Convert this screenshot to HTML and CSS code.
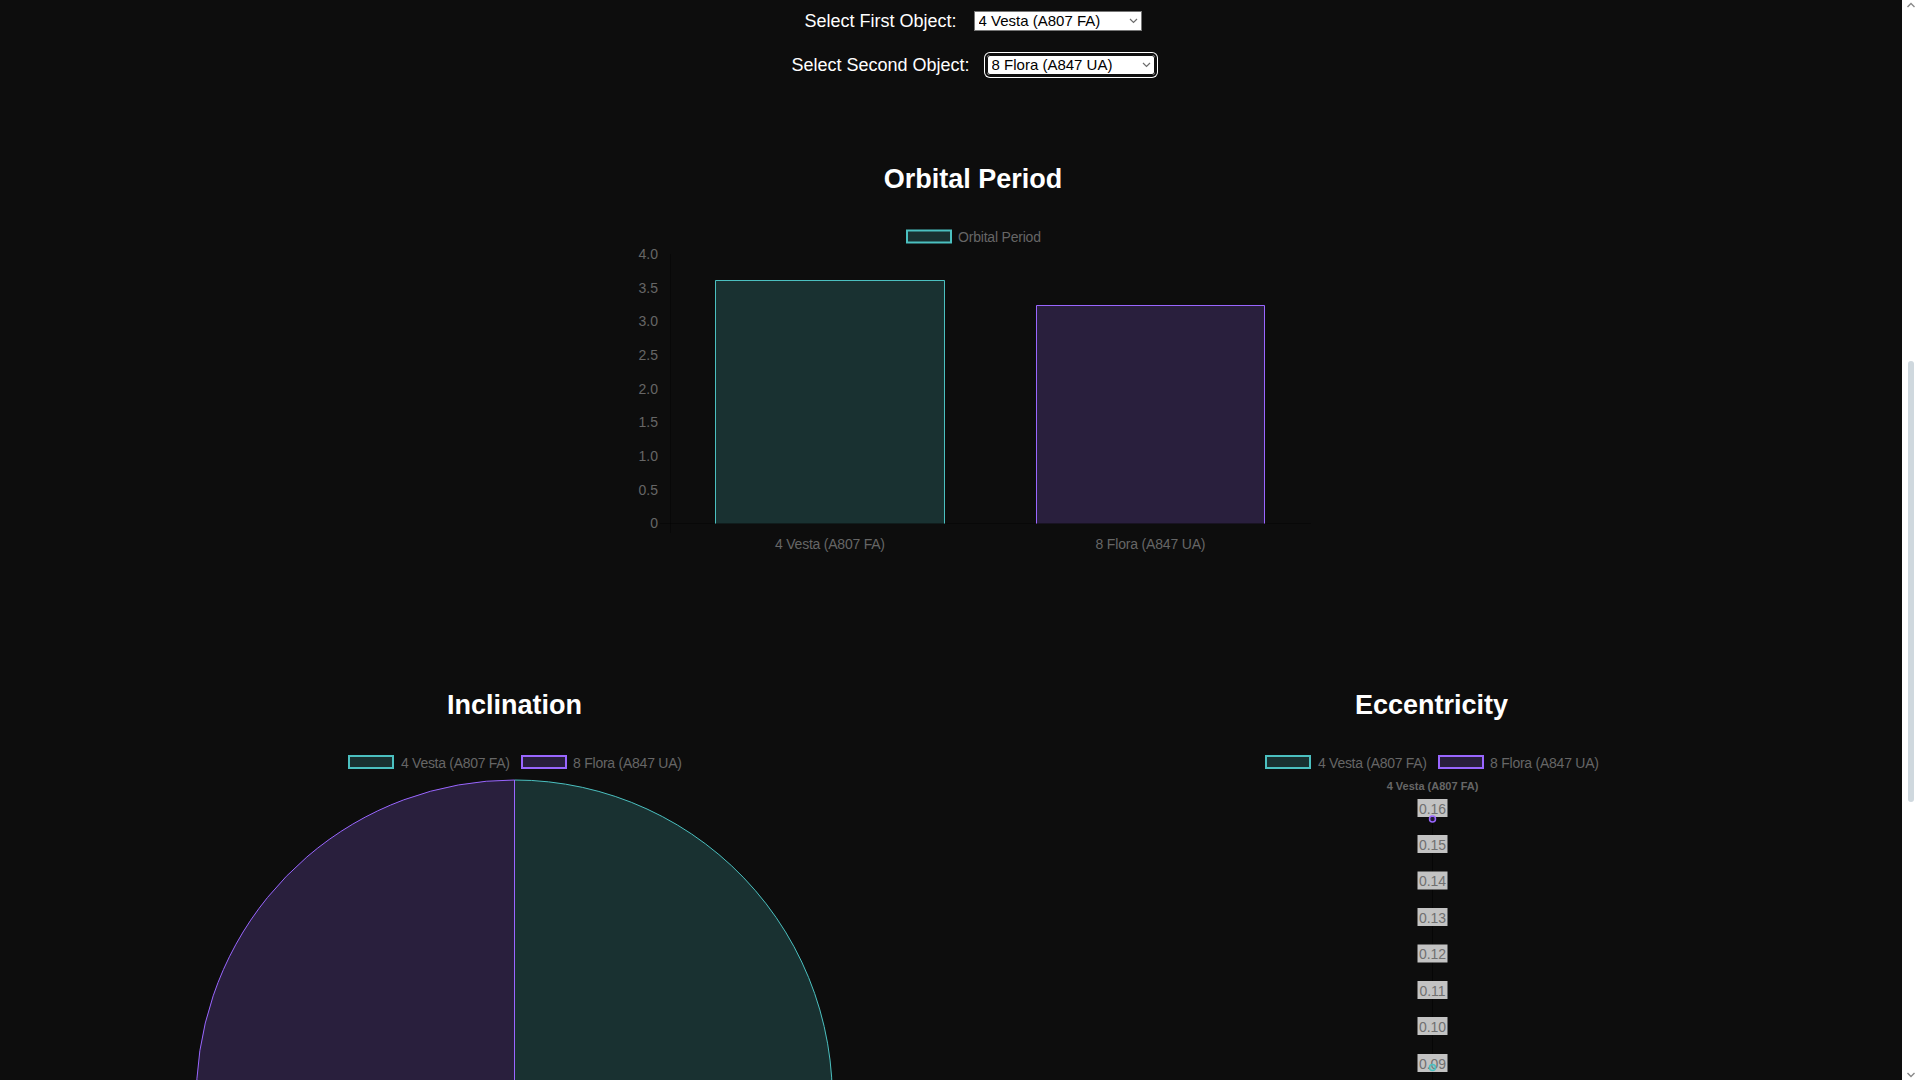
FILE: index.html
```html
<!DOCTYPE html>
<html lang="en">
<head>
<meta charset="utf-8">
<title>Asteroid Comparison</title>
<link rel="stylesheet" href="styles.css">
</head>
<body>
<div class="page">
  <div class="controls">
    <div class="control-row">
      <label class="control-label" for="first-object">Select First Object:</label>
      <span class="select-wrap">
        <select id="first-object" class="object-select">
          <option>1 Ceres (A801 AA)</option>
          <option>2 Pallas (A802 FA)</option>
          <option>3 Juno (A804 RA)</option>
          <option selected>4 Vesta (A807 FA)</option>
          <option>8 Flora (A847 UA)</option>
        </select>
        <svg class="select-chevron" width="9" height="6" viewBox="0 0 9 6"><polyline points="1,1 4.5,4.5 8,1"/></svg>
      </span>
    </div>
    <div class="control-row">
      <label class="control-label" for="second-object">Select Second Object:</label>
      <span class="select-wrap">
        <select id="second-object" class="object-select is-focused">
          <option>1 Ceres (A801 AA)</option>
          <option>2 Pallas (A802 FA)</option>
          <option>3 Juno (A804 RA)</option>
          <option>4 Vesta (A807 FA)</option>
          <option selected>8 Flora (A847 UA)</option>
        </select>
        <svg class="select-chevron" width="9" height="6" viewBox="0 0 9 6"><polyline points="1,1 4.5,4.5 8,1"/></svg>
      </span>
    </div>
  </div>

  <section class="chart-block chart-block--period">
    <h2 class="chart-title">Orbital Period</h2>
    <svg class="chart chart--bar" width="680" height="340" viewBox="0 0 680 340">
      <rect class="legend-box legend-box--teal" x="274" y="10.5" width="44" height="12"/>
      <text class="chart-text" x="325" y="17" dominant-baseline="central" textLength="83" lengthAdjust="spacing">Orbital Period</text>

      <line class="axis-line" x1="37.5" y1="34" x2="37.5" y2="313"/>
      <line class="axis-line" x1="27" y1="303.5" x2="678" y2="303.5"/>

      <g class="chart-text tick-y" text-anchor="end">
        <text x="25" y="34" dominant-baseline="central">4.0</text>
        <text x="25" y="67.7" dominant-baseline="central">3.5</text>
        <text x="25" y="101.3" dominant-baseline="central">3.0</text>
        <text x="25" y="135" dominant-baseline="central">2.5</text>
        <text x="25" y="168.6" dominant-baseline="central">2.0</text>
        <text x="25" y="202.3" dominant-baseline="central">1.5</text>
        <text x="25" y="236" dominant-baseline="central">1.0</text>
        <text x="25" y="269.6" dominant-baseline="central">0.5</text>
        <text x="25" y="303.3" dominant-baseline="central">0</text>
      </g>

      <rect class="fill-teal" x="82" y="60" width="230" height="243.5"/>
      <path class="stroke-teal" d="M82.5 303.5 V60.5 H311.5 V303.5"/>
      <rect class="fill-purple" x="403" y="85" width="229" height="218.5"/>
      <path class="stroke-purple" d="M403.5 303.5 V85.5 H631.5 V303.5"/>

      <g class="chart-text" text-anchor="middle">
        <text x="197" y="324" dominant-baseline="central" textLength="110" lengthAdjust="spacing">4 Vesta (A807 FA)</text>
        <text x="517.5" y="324" dominant-baseline="central" textLength="110" lengthAdjust="spacing">8 Flora (A847 UA)</text>
      </g>
    </svg>
  </section>

  <div class="chart-grid">
    <section class="chart-block">
      <h2 class="chart-title">Inclination</h2>
      <svg class="chart chart--half" width="917" height="700" viewBox="0 0 917 700">
        <rect class="legend-box legend-box--teal" x="293" y="16" width="44" height="12"/>
        <text class="chart-text" x="345" y="22.5" dominant-baseline="central" textLength="109" lengthAdjust="spacing">4 Vesta (A807 FA)</text>
        <rect class="legend-box legend-box--purple" x="466" y="16" width="44" height="12"/>
        <text class="chart-text" x="517" y="22.5" dominant-baseline="central" textLength="109" lengthAdjust="spacing">8 Flora (A847 UA)</text>

        <path class="slice slice--teal" d="M458.5 358 L458.5 40 A318 318 0 1 1 365 662 Z"/>
        <path class="slice slice--purple" d="M458.5 358 L365 662 A318 318 0 0 1 458.5 40 Z"/>
      </svg>
    </section>

    <section class="chart-block">
      <h2 class="chart-title">Eccentricity</h2>
      <svg class="chart chart--half" width="917" height="700" viewBox="0 0 917 700">
        <rect class="legend-box legend-box--teal" x="293" y="16" width="44" height="12"/>
        <text class="chart-text" x="345" y="22.5" dominant-baseline="central" textLength="109" lengthAdjust="spacing">4 Vesta (A807 FA)</text>
        <rect class="legend-box legend-box--purple" x="466" y="16" width="44" height="12"/>
        <text class="chart-text" x="517" y="22.5" dominant-baseline="central" textLength="109" lengthAdjust="spacing">8 Flora (A847 UA)</text>

        <text class="point-label" x="459.5" y="46" text-anchor="middle" dominant-baseline="central">4 Vesta (A807 FA)</text>
        <line class="radar-line" x1="459.5" y1="62" x2="459.5" y2="650"/>

        <g class="radar-ticks" text-anchor="middle">
          <rect x="444.5" y="59" width="30" height="18"/><text x="459.5" y="68.5" dominant-baseline="central">0.16</text>
          <rect x="444.5" y="95" width="30" height="18"/><text x="459.5" y="104.5" dominant-baseline="central">0.15</text>
          <rect x="444.5" y="131.5" width="30" height="18"/><text x="459.5" y="141" dominant-baseline="central">0.14</text>
          <rect x="444.5" y="168" width="30" height="18"/><text x="459.5" y="177.5" dominant-baseline="central">0.13</text>
          <rect x="444.5" y="204.5" width="30" height="18"/><text x="459.5" y="214" dominant-baseline="central">0.12</text>
          <rect x="444.5" y="241" width="30" height="18"/><text x="459.5" y="250.5" dominant-baseline="central">0.11</text>
          <rect x="444.5" y="277" width="30" height="18"/><text x="459.5" y="286.5" dominant-baseline="central">0.10</text>
          <rect x="444.5" y="314" width="30" height="18"/><text x="459.5" y="323.5" dominant-baseline="central">0.09</text>
        </g>

        <circle class="radar-point radar-point--purple" cx="459.5" cy="79" r="3"/>
        <circle class="radar-point radar-point--teal" cx="459.5" cy="327.5" r="3"/>
      </svg>
    </section>
  </div>
</div>

<div class="fake-scrollbar" aria-hidden="true">
  <svg class="scroll-arrow" width="18" height="12" viewBox="0 0 18 12"><polyline points="5.5,7 9,3.5 12.5,7"/></svg>
  <div class="scroll-track"><div class="scroll-thumb"></div></div>
  <svg class="scroll-arrow" width="18" height="12" viewBox="0 0 18 12"><polyline points="5.5,5 9,8.5 12.5,5"/></svg>
</div>
</body>
</html>
```

FILE: styles.css
```css
html, body {
  margin: 0;
  padding: 0;
  background: #0d0d0d;
}

body {
  font-family: "Liberation Sans", Arial, sans-serif;
  color: #ffffff;
}

.page {
  width: 1834px;
  padding: 10px 0 0 56px;
}

.controls {
  display: flex;
  flex-direction: column;
  gap: 22px;
}

.control-row {
  display: flex;
  justify-content: center;
  align-items: center;
  gap: 17px;
  height: 22px;
}

.control-label {
  font-size: 18px;
  color: #ffffff;
}

.select-wrap {
  position: relative;
  display: inline-flex;
}

.object-select {
  -webkit-appearance: none;
  appearance: none;
  box-sizing: border-box;
  width: 168px;
  height: 20px;
  margin: 0;
  padding: 0 20px 0 4px;
  border: 1px solid #767676;
  border-radius: 0;
  font-family: "Liberation Sans", Arial, sans-serif;
  font-size: 15px;
  line-height: 18px;
  color: #000000;
  background: #ffffff;
}

.object-select.is-focused {
  outline: 2px solid #101010;
  outline-offset: 0;
  border-color: #101010;
  box-shadow: 0 0 0 3px #ffffff;
  border-radius: 3px;
}

.select-chevron {
  position: absolute;
  right: 4px;
  top: 7px;
  pointer-events: none;
}

.select-chevron polyline {
  fill: none;
  stroke: #6d6d6d;
  stroke-width: 1.2;
}

.chart-block {
  text-align: center;
}

.chart-block--period {
  margin-top: 88px;
}

.chart-title {
  margin: 0;
  font-size: 27px;
  line-height: 31px;
  font-weight: bold;
  color: #ffffff;
}

.chart {
  display: block;
  margin: 0 auto;
  overflow: visible;
}

.chart--bar {
  margin-top: 25px;
}

.chart--half {
  margin-top: 19px;
}

.chart-grid {
  display: grid;
  grid-template-columns: 917px 917px;
  margin-top: 130px;
}

.chart-text {
  font-family: "Liberation Sans", Arial, sans-serif;
  font-size: 14px;
  fill: #666666;
}

.legend-box {
  stroke-width: 2;
}

.legend-box--teal {
  fill: #193131;
  stroke: #4bc0c0;
}

.legend-box--purple {
  fill: #291f3d;
  stroke: #9966ff;
}

.axis-line {
  stroke: rgba(0, 0, 0, 0.35);
  stroke-width: 1;
}

.fill-teal {
  fill: #193131;
}

.fill-purple {
  fill: #291f3d;
}

.stroke-teal {
  fill: none;
  stroke: #4bc0c0;
  stroke-width: 1;
}

.stroke-purple {
  fill: none;
  stroke: #9966ff;
  stroke-width: 1;
}

.slice {
  stroke-width: 1;
}

.slice--teal {
  fill: #193131;
  stroke: #4bc0c0;
}

.slice--purple {
  fill: #291f3d;
  stroke: #9966ff;
}

.point-label {
  font-family: "Liberation Sans", Arial, sans-serif;
  font-size: 11px;
  font-weight: bold;
  fill: #666666;
}

.radar-line {
  stroke: #060606;
  stroke-width: 1;
}

.radar-ticks rect {
  fill: #c3c3c3;
}

.radar-ticks text {
  font-family: "Liberation Sans", Arial, sans-serif;
  font-size: 14px;
  fill: #707070;
}

.radar-point {
  stroke-width: 1.5;
}

.radar-point--purple {
  fill: rgba(153, 102, 255, 0.2);
  stroke: #9966ff;
}

.radar-point--teal {
  fill: rgba(75, 192, 192, 0.2);
  stroke: #4bc0c0;
}

.fake-scrollbar {
  position: fixed;
  top: 0;
  right: 0;
  width: 18px;
  height: 100vh;
  display: flex;
  flex-direction: column;
  background: #ffffff;
}

.scroll-arrow {
  display: block;
  flex: none;
}

.scroll-arrow polyline {
  fill: none;
  stroke: #8a8a8a;
  stroke-width: 1.4;
}

.scroll-track {
  flex: 1;
  padding-top: 349px;
}

.scroll-thumb {
  width: 6px;
  height: 441px;
  margin-left: 6px;
  border-radius: 3px;
  background: #cfd8de;
}
```
